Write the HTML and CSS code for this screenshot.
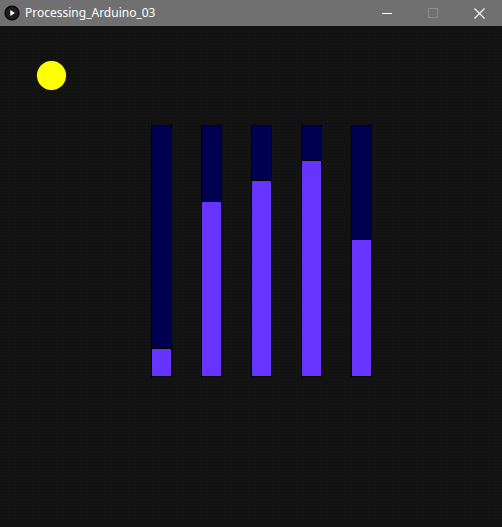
FILE: index.html
```html
<!DOCTYPE html>
<html>
<head>
<meta charset="utf-8">
<link rel="stylesheet" href="styles.css">
</head>
<body>
<div class="window">
  <div class="titlebar">
    <div class="app-icon">
      <svg width="16" height="16" viewBox="0 0 16 16"><circle cx="8" cy="8" r="7.6" fill="#000"/><circle cx="8" cy="8" r="6.2" fill="#1e1e1e"/><path d="M6.3 5 L10.8 8 L6.3 11 Z" fill="#fff"/></svg>
    </div>
    <div class="title">Processing_Arduino_03</div>
    <div class="controls">
      <div class="ctl"><svg width="10" height="10" viewBox="0 0 10 10"><path d="M0 5.5 H10" stroke="#fff" stroke-width="1"/></svg></div>
      <div class="ctl"><svg width="10" height="10" viewBox="0 0 10 10"><rect x="0.5" y="0.5" width="9" height="9" fill="none" stroke="#8c8c8c" stroke-width="1"/></svg></div>
      <div class="ctl"><svg width="11" height="11" viewBox="0 0 11 11"><path d="M0.5 0.5 L10.5 10.5 M10.5 0.5 L0.5 10.5" stroke="#fff" stroke-width="1.1"/></svg></div>
    </div>
  </div>
  <div class="canvas">
    <div class="ball"></div>
    <div class="bars">
      <div class="bar"><div class="fill" style="height:27px"></div></div>
      <div class="bar"><div class="fill" style="height:174px"></div></div>
      <div class="bar"><div class="fill" style="height:195px"></div></div>
      <div class="bar"><div class="fill" style="height:215px"></div></div>
      <div class="bar"><div class="fill" style="height:136px"></div></div>
    </div>
  </div>
</div>
</body>
</html>
```
FILE: styles.css
```css
html, body {
  margin: 0;
  padding: 0;
  width: 502px;
  height: 527px;
  overflow: hidden;
  background: #131313;
}
.window {
  display: flex;
  flex-direction: column;
  width: 502px;
  height: 527px;
}
.titlebar {
  height: 26px;
  flex: 0 0 26px;
  background: #707070;
  display: flex;
  align-items: center;
  font-family: "Segoe UI", "Noto Sans", "Open Sans", sans-serif;
  font-size: 12px;
  color: #fff;
}
.app-icon {
  width: 16px;
  height: 16px;
  margin-left: 4px;
  margin-right: 5px;
  display: flex;
}
.title {
  flex: 1;
  padding-bottom: 1px;
}
.controls {
  display: flex;
  height: 26px;
}
.ctl {
  width: 46px;
  display: flex;
  align-items: center;
  justify-content: center;
}
.canvas {
  position: relative;
  flex: 1;
  background-color: #131313;
  background-image: radial-gradient(circle, #0c0c0c 0.7px, transparent 0.8px);
  background-size: 3px 3px;
}
.ball {
  position: absolute;
  left: 37px;
  top: 35px;
  width: 29px;
  height: 29px;
  border-radius: 50%;
  background: #ffff00;
  box-shadow: 0 0 0 0.5px #3a3a00;
}
.bars {
  display: flex;
  gap: 29px;
  padding-left: 151px;
  padding-top: 99px;
}
.bar {
  width: 19px;
  height: 250px;
  border: 1px solid #000;
  background: #000050;
  display: flex;
  flex-direction: column;
  justify-content: flex-end;
}
.fill {
  background: #6633ff;
  border-top: 1px solid #000;
}
```
